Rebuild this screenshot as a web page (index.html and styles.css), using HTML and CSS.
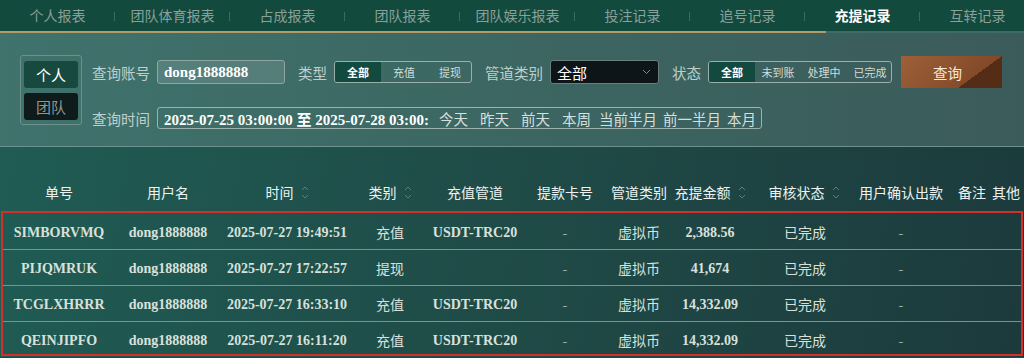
FILE: index.html
```html
<!DOCTYPE html>
<html lang="zh-CN">
<head>
    <meta charset="UTF-8">
    <title>充提记录</title>
    <link rel="stylesheet" href="styles.css">
</head>
<body>
    <nav class="tabs">
        <a class="tab">个人报表</a>
        <a class="tab">团队体育报表</a>
        <a class="tab">占成报表</a>
        <a class="tab">团队报表</a>
        <a class="tab">团队娱乐报表</a>
        <a class="tab">投注记录</a>
        <a class="tab">追号记录</a>
        <a class="tab active">充提记录</a>
        <a class="tab last">互转记录</a>
    </nav>

    <section class="filter">
        <div class="mode">
            <button class="mode-btn on">个人</button>
            <button class="mode-btn">团队</button>
        </div>
        <div class="fields">
            <div class="row">
                <label class="lbl">查询账号</label>
                <div class="text-input">dong1888888</div>
                <label class="lbl gap">类型</label>
                <div class="seg seg-type">
                    <span class="on">全部</span><span>充值</span><span>提现</span>
                </div>
                <label class="lbl gap">管道类别</label>
                <div class="select">
                    <span>全部</span>
                    <svg width="9" height="6" viewBox="0 0 9 6"><path d="M1 1l3.5 3.5L8 1" fill="none" stroke="#7d8a8a" stroke-width="1"/></svg>
                </div>
                <label class="lbl gap">状态</label>
                <div class="seg seg-state">
                    <span class="on">全部</span><span>未到账</span><span>处理中</span><span>已完成</span>
                </div>
                <button class="search">查询</button>
            </div>
            <div class="row row2">
                <label class="lbl">查询时间</label>
                <div class="range">
                    <input class="range-text" type="text" readonly value="2025-07-25 03:00:00 至 2025-07-28 03:00:00">
                    <span class="quick">今天</span>
                    <span class="quick">昨天</span>
                    <span class="quick">前天</span>
                    <span class="quick">本周</span>
                    <span class="quick long">当前半月</span>
                    <span class="quick long">前一半月</span>
                    <span class="quick">本月</span>
                </div>
            </div>
        </div>
    </section>

    <section class="records">
        <div class="grid head">
            <div>单号</div>
            <div>用户名</div>
            <div>时间<i class="sort"></i></div>
            <div>类别<i class="sort"></i></div>
            <div>充值管道</div>
            <div>提款卡号</div>
            <div>管道类别</div>
            <div>充提金额<i class="sort"></i></div>
            <div>审核状态<i class="sort"></i></div>
            <div>用户确认出款</div>
            <div>备注</div>
            <div>其他</div>
        </div>
        <div class="body" id="rows"></div>
    </section>

    <script>
        const records = [
            ['SIMBORVMQ', 'dong1888888', '2025-07-27 19:49:51', '充值', 'USDT-TRC20', '2,388.56'],
            ['PIJQMRUK', 'dong1888888', '2025-07-27 17:22:57', '提现', '', '41,674'],
            ['TCGLXHRRR', 'dong1888888', '2025-07-27 16:33:10', '充值', 'USDT-TRC20', '14,332.09'],
            ['QEINJIPFO', 'dong1888888', '2025-07-27 16:11:20', '充值', 'USDT-TRC20', '14,332.09']
        ];

        const sortIcon = '<svg width="8" height="15" viewBox="0 0 8 15"><path d="M1 5l3-3 3 3M1 10l3 3 3-3" fill="none" stroke="#5f7c78" stroke-width="1"/></svg>';
        document.querySelectorAll('.sort').forEach(el => el.innerHTML = sortIcon);

        const rowsEl = document.getElementById('rows');
        records.forEach(r => {
            const row = document.createElement('div');
            row.className = 'grid row-data';
            row.innerHTML =
                `<div class="num">${r[0]}</div>` +
                `<div class="num">${r[1]}</div>` +
                `<div class="num">${r[2]}</div>` +
                `<div>${r[3]}</div>` +
                `<div class="num">${r[4]}</div>` +
                `<div class="dash">-</div>` +
                `<div>虚拟币</div>` +
                `<div class="num">${r[5]}</div>` +
                `<div class="status">已完成</div>` +
                `<div class="dash">-</div>` +
                `<div></div><div></div>`;
            rowsEl.appendChild(row);
        });
    </script>
</body>
</html>
```

FILE: styles.css
```css
body {
    margin: 0;
    width: 1024px;
    height: 358px;
    overflow: hidden;
    font-family: "Noto Sans CJK SC", "Noto Sans", sans-serif;
    font-size: 14px;
    background: #1d4a46;
    color: #e6ecea;
}
.tabs {
    display: flex;
    height: 31px;
    background: #124a3e;
    border-bottom: 2px solid #3f6a66;
    position: relative;
    white-space: nowrap;
}
.tabs::after {
    content: "";
    position: absolute;
    left: 0;
    bottom: -2px;
    width: 826px;
    height: 2px;
    background: #b49a6a;
}
.tab {
    flex: 0 0 115px;
    text-align: center;
    line-height: 31px;
    color: #8aa099;
    position: relative;
}
.tab::after {
    content: "";
    position: absolute;
    right: 0;
    top: 12px;
    width: 1px;
    height: 9px;
    background: #3e6a60;
}
.tab.last::after {
    display: none;
}
.tab.active {
    color: #ffffff;
    font-weight: bold;
}

.filter {
    display: flex;
    align-items: flex-start;
    height: 114px;
    padding: 22px 0 0 20px;
    box-sizing: border-box;
    background: linear-gradient(90deg, #40736d 0%, #3c6662 50%, #3b5b5a 100%);
    border-bottom: 1px solid #6d918d;
}
.mode {
    width: 62px;
    height: 70px;
    box-sizing: border-box;
    border: 1px solid #6f8f8b;
    border-radius: 3px;
    padding: 5px 3px 3px 3px;
    display: flex;
    flex-direction: column;
    gap: 5px;
}
.mode-btn {
    height: 27px;
    border: none;
    border-radius: 3px;
    font-family: inherit;
    font-size: 15px;
    background: #0f1a1b;
    color: #8c9896;
    padding: 0;
}
.mode-btn.on {
    background: #17493f;
    color: #ffffff;
}
.fields {
    margin-left: 10px;
}
.row {
    display: flex;
    align-items: center;
    height: 32px;
    margin-top: 1px;
}
.row2 {
    margin-top: 19px;
    height: 22px;
}
.lbl {
    color: #bfd0cc;
    font-size: 14.5px;
    margin-right: 7px;
}
.lbl.gap {
    margin-left: 13px;
}
.text-input {
    width: 128px;
    height: 24px;
    box-sizing: border-box;
    border: 1px solid #8ea7a3;
    border-radius: 3px;
    background: rgba(255, 255, 255, 0.12);
    padding-left: 6px;
    font-family: "Liberation Serif", serif;
    font-weight: bold;
    font-size: 15px;
    line-height: 22px;
    color: #ffffff;
}
.seg {
    display: flex;
    height: 22px;
    box-sizing: border-box;
    border: 1px solid #9ab0ac;
    border-radius: 3px;
    overflow: hidden;
    font-size: 11px;
}
.seg span {
    line-height: 20px;
    text-align: center;
    color: #d2dbd8;
}
.seg span.on {
    background: #124a3f;
    color: #ffffff;
    font-weight: bold;
}
.seg-type {
    width: 138px;
}
.seg-type span {
    flex: 0 0 46px;
}
.seg-state {
    width: 184px;
}
.seg-state span {
    flex: 0 0 46px;
}
.select {
    width: 109px;
    height: 24px;
    box-sizing: border-box;
    border: 1px solid #6b7d7d;
    border-radius: 3px;
    background: #0e1519;
    display: flex;
    align-items: center;
    justify-content: space-between;
    padding: 0 7px 0 6px;
    font-size: 15px;
    color: #ffffff;
}
.search {
    margin-left: 9px;
    width: 101px;
    height: 32px;
    border: none;
    font-family: inherit;
    font-size: 14.5px;
    color: #f3e9df;
    background:
        linear-gradient(to bottom right, transparent 50%, #552c15 50%) right bottom / 44px 32px no-repeat,
        linear-gradient(135deg, #9d6039 0%, #8a4f2c 55%, #7a4224 100%);
    padding: 0 8px 0 0;
}
.range {
    display: flex;
    align-items: center;
    width: 605px;
    height: 22px;
    box-sizing: border-box;
    border: 1px solid #9cb2ae;
    border-radius: 3px;
    padding-left: 6px;
    white-space: nowrap;
}
.range-text {
    flex: 0 0 264px;
    width: 264px;
    height: 20px;
    padding: 0;
    border: none;
    background: transparent;
    outline: none;
    font-family: "Liberation Serif", "Noto Sans CJK SC", serif;
    font-weight: bold;
    font-size: 15px;
    color: #ffffff;
    margin-right: 11px;
}
.quick {
    color: #d6dfdc;
    font-size: 14.5px;
    margin-right: 12px;
}
.quick:nth-child(5) {
    margin-right: 8px;
}
.quick.long {
    margin-right: 6px;
}

.records {
    height: 210px;
    padding: 0 2px;
    background: linear-gradient(100deg, #1f5c54 0%, #1f4b47 50%, #1c3a3c 100%);
}
.grid {
    display: grid;
    grid-template-columns: 114px 104px 134px 72px 98px 82px 66px 76px 104px 98px 40px 32px;
}
.grid > div {
    display: flex;
    align-items: center;
    justify-content: center;
    white-space: nowrap;
}
.head {
    height: 65px;
    align-items: end;
}
.head > div {
    padding-bottom: 10px;
    color: #eef2f0;
}
.head > div:nth-child(9) {
    padding-left: 8px;
}
.head > div:nth-child(11) {
    justify-content: flex-end;
    padding-right: 4px;
}
.sort {
    display: inline-flex;
    margin-left: 7px;
}
.body {
    outline: 2px solid #d3302a;
    outline-offset: -1px;
    height: 143px;
    padding-top: 2px;
    box-sizing: border-box;
}
.row-data {
    height: 35px;
    border-bottom: 1px solid #6f9893;
    color: #d9e0dc;
}
.row-data:last-child {
    border-bottom: none;
}
.num {
    font-family: "Liberation Serif", serif;
    font-weight: bold;
    font-size: 14px;
    padding-top: 3px;
}
.status {
    padding-left: 10px;
}
.dash {
    color: #9fb0ac;
}
```
